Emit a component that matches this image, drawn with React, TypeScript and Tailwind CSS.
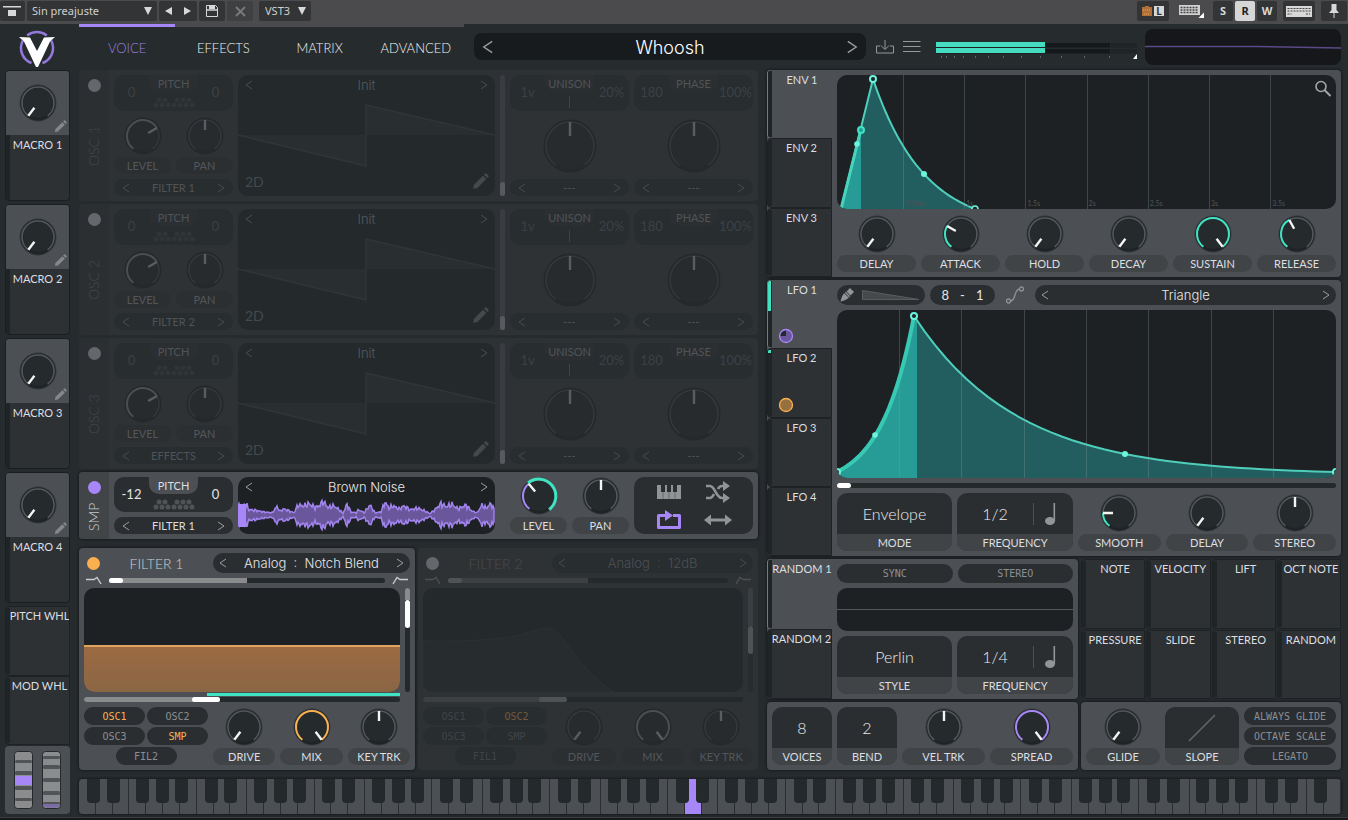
import type { ReactNode } from "react";
import clsx from "clsx";

const TEAL = "#3fe3c2";
const PURPLE = "#a787f7";
const ORANGE = "#fbb04f";

type Point = [number, number];

// samples an exponential segment between two points, k bends the curve
function curve([x0, y0]: Point, [x1, y1]: Point, k: number): string {
    const steps = 40;
    let d = "";
    for (let i = 0; i <= steps; i++) {
        const u = i / steps;
        const v = (1 - Math.exp(-k * u)) / (1 - Math.exp(-k));
        d += ` L${(x0 + (x1 - x0) * u).toFixed(2)} ${(y0 + (y1 - y0) * v).toFixed(2)}`;
    }
    return d;
}

function polar(c: number, r: number, deg: number): string {
    const a = ((deg - 90) * Math.PI) / 180;
    return `${(c + r * Math.cos(a)).toFixed(2)} ${(c + r * Math.sin(a)).toFixed(2)}`;
}

function arc(c: number, r: number, from: number, to: number): string {
    const large = to - from > 180 ? 1 : 0;
    return `M${polar(c, r, from)} A${r} ${r} 0 ${large} 1 ${polar(c, r, to)}`;
}

type DialProps = {
    value: number;
    color?: string;
    modColor?: string;
    big?: boolean;
};

function Dial({ value, color, modColor, big }: DialProps) {
    const size = big ? 56 : 40;
    const c = size / 2;
    const r = big ? 24 : 16;
    const angle = -143 + 286 * value;
    return (
        <svg
            width={size}
            height={size}
            viewBox={`0 0 ${size} ${size}`}
            className="shrink-0"
            aria-hidden="true">
            <circle cx={c} cy={c} r={r + 2.5} className="fill-[#1b1f22]/50 group-data-off:fill-[#25292c]" />
            <circle cx={c} cy={c} r={r + 1.5} className="fill-[#1f2427] group-data-off:fill-[#25292c]" />
            <circle cx={c} cy={c} r={r - 1} className="fill-[#252a2d] group-data-off:fill-[#272b2e]" />
            <path
                d={arc(c, r, -143, 143)}
                fill="none"
                strokeWidth="1.6"
                className={big ? "stroke-[#34383b]" : "stroke-[#54585b] group-data-off:stroke-[#34383b]"}
            />
            {value > 0 && value !== 0.5 && (
                <path
                    d={arc(c, r, -143, angle)}
                    fill="none"
                    stroke={color}
                    strokeWidth="2"
                    className="group-data-off:stroke-[#4a4e51]"
                />
            )}
            {modColor && (
                <path d={arc(c, r + 1, angle, 143)} fill="none" stroke={modColor} strokeWidth="3" />
            )}
            <path
                d={`M${polar(c, big ? 10 : 6, angle)} L${polar(c, r, angle)}`}
                strokeWidth="2.4"
                className="stroke-[#f4f4f4] group-data-off:stroke-[#595d60]"
            />
        </svg>
    );
}

function Knob({ label, ...dial }: DialProps & { label: string }) {
    return (
        <label className="flex min-w-0 flex-1 flex-col items-center justify-end gap-px">
            <Dial {...dial} />
            <input
                type="range"
                min={0}
                max={1}
                step={0.01}
                defaultValue={dial.value}
                className="sr-only"
            />
            <span className="flex h-[17px] w-full items-center justify-center rounded-full bg-[#414447] pt-0.5 text-[11px] whitespace-nowrap text-[#dcdee0] group-data-off:bg-[#2b2f32] group-data-off:text-[#53575a]">
                {label}
            </span>
        </label>
    );
}

function BigKnob({ name }: { name: string }) {
    return (
        <label className="flex h-[58px] items-end justify-center">
            <Dial value={0.5} big />
            <input type="range" aria-label={name} defaultValue={50} className="sr-only" />
        </label>
    );
}

function Chevron({ right, big }: { right?: boolean; big?: boolean }) {
    return (
        <svg
            width={big ? 12 : 8}
            height={big ? 14 : 10}
            viewBox="0 0 8 10"
            fill="none"
            stroke="currentColor"
            strokeWidth="1"
            aria-hidden="true">
            <path d={right ? "M1 1l6 4-6 4" : "M7 1L1 5l6 4"} />
        </svg>
    );
}

type SelectorProps = {
    name: string;
    children: ReactNode;
    className?: string;
    big?: boolean;
};

function Selector({ name, children, className, big }: SelectorProps) {
    return (
        <div className={clsx("flex items-center justify-between", className)}>
            <button
                aria-label={`Previous ${name}`}
                className="text-[#9b9ea0] group-data-off:text-[#484c4f]">
                <Chevron big={big} />
            </button>
            <span className="pt-0.5 whitespace-pre">{children}</span>
            <button aria-label={`Next ${name}`} className="text-[#9b9ea0] group-data-off:text-[#484c4f]">
                <Chevron right big={big} />
            </button>
        </div>
    );
}

const pill =
    "h-[17px] rounded-full bg-[#2a2e31] px-2 text-[11px] text-[#dcdee0] group-data-off:bg-[#282d30] group-data-off:text-[#505457]";

function PowerButton({ name, color }: { name: string; color?: string }) {
    return (
        <button
            aria-label={name}
            className="size-[13px] rounded-full bg-[#64676c]"
            style={{ backgroundColor: color }}
        />
    );
}

function KeyDots() {
    const dots: Point[] = [];
    for (let i = 0; i < 7; i++) dots.push([3 + i * 6, 9]);
    for (const i of [0, 1, 3, 4, 5]) dots.push([6 + i * 6, 4]);
    return (
        <svg width="42" height="13" viewBox="0 0 42 13" aria-hidden="true">
            {dots.map(([x, y]) => (
                <circle key={`${x}-${y}`} cx={x} cy={y} r="2.5" className="fill-[#505356] group-data-off:fill-[#313538]" />
            ))}
        </svg>
    );
}

type ValueBoxProps = {
    title: string;
    left: string;
    right: string;
    children?: ReactNode;
    className?: string;
};

// two values with a title notch cut out of the top edge
function ValueBox({ title, left, right, children, className }: ValueBoxProps) {
    return (
        <div
            className={clsx(
                "grid grid-cols-[35px_1fr_35px] items-center rounded-[10px] bg-[#2a2e31] group-data-off:bg-[#282d30]",
                className,
            )}>
            <span className="text-center text-[13px] text-[#e6e6e6] group-data-off:text-[#3d4144]">{left}</span>
            <div className="flex h-full flex-col items-center gap-1">
                <span className="flex h-[17px] w-full items-center justify-center rounded-b-[10px] bg-[#4c4f53] pt-0.5 text-[11px] text-[#dcdee0] group-data-off:bg-[#2b2f32] group-data-off:text-[#505457]">
                    {title}
                </span>
                {children}
            </div>
            <span className="text-center text-[13px] text-[#e6e6e6] group-data-off:text-[#3d4144]">{right}</span>
        </div>
    );
}

function Pencil({ size }: { size: number }) {
    return (
        <svg width={size} height={size} viewBox="0 0 14 14" fill="currentColor" aria-hidden="true">
            <path d="M1 13l.5-3.2L9 2.3 11.7 5 4.2 12.5zM9.8 1.5l1-1a.8.8 0 0 1 1.1 0l1.600 1.600a.8.8 0 0 1 0 1.100l-1 1z" />
        </svg>
    );
}

function SideStrip({ name, color }: { name: string; color?: string }) {
    return (
        <div className="flex w-[30px] shrink-0 flex-col items-center rounded-l bg-[#424548] pt-[9px] group-data-off:bg-[#2b2f32]">
            <PowerButton name={name} color={color} />
            <span className="flex flex-1 rotate-180 items-center justify-center text-[14px] leading-[14px] font-light text-[#c4c6c8] [writing-mode:vertical-rl] group-data-off:text-[#44484b]">
                {name}
            </span>
        </div>
    );
}

function Oscillator({ name, output }: { name: string; output: string }) {
    return (
        <section data-off="" className="group flex rounded bg-[#2e3235]">
            <SideStrip name={name} />
            <div className="flex min-w-0 flex-1 gap-[5px] p-[5px]">
                <div className="flex w-[119px] shrink-0 flex-col gap-[5px]">
                    <ValueBox title="PITCH" left="0" right="0" className="h-9">
                        <KeyDots />
                    </ValueBox>
                    <div className="flex gap-[5px]">
                        <Knob label="LEVEL" value={0.71} />
                        <Knob label="PAN" value={0.5} />
                    </div>
                    <Selector name="output" className={pill}>
                        {output}
                    </Selector>
                </div>
                <div className="relative min-w-0 flex-1 overflow-hidden rounded-[10px] bg-[#24292c]">
                    <svg
                        viewBox="0 0 257 121"
                        preserveAspectRatio="none"
                        className="absolute inset-0 size-full"
                        aria-hidden="true">
                        <path
                            d="M0 60L128 91V30L257 60"
                            fill="#292e31"
                            stroke="#303538"
                            strokeWidth="1.500"
                        />
                    </svg>
                    <Selector name="wavetable" className="relative h-5 px-[7px] font-[Inter] text-[13px] font-light text-[#55595c]">
                        Init
                    </Selector>
                    <span className="absolute bottom-1 left-[7px] text-[14px] text-[#45494c]">2D</span>
                    <button aria-label="Edit wavetable" className="absolute right-1.5 bottom-1.5 text-[#45494c]">
                        <Pencil size={17} />
                    </button>
                </div>
                <div className="flex w-[5px] shrink-0 items-end rounded-sm bg-[#393c40]">
                    <div className="h-3.5 w-full rounded-sm bg-[#575a5e]" />
                </div>
                <div className="flex w-[119px] shrink-0 flex-col gap-[5px]">
                    <ValueBox title="UNISON" left="1v" right="20%" className="h-9">
                        <span className="h-3 w-px bg-[#3f4346]" />
                    </ValueBox>
                    <BigKnob name="Unison detune" />
                    <Selector name="unison warp" className={pill}>
                        ---
                    </Selector>
                </div>
                <div className="flex w-[119px] shrink-0 flex-col gap-[5px]">
                    <ValueBox title="PHASE" left="180" right="100%" className="h-9" />
                    <BigKnob name="Phase" />
                    <Selector name="phase warp" className={pill}>
                        ---
                    </Selector>
                </div>
            </div>
        </section>
    );
}

// peak heights of the noise sample: [x, height]
const peaks: Point[] = [
    [0, 12], [9, 12], [11, 7], [18, 6], [26, 4], [34, 3], [39, 11], [42, 5], [46, 8], [52, 5],
    [56, 3], [60, 13], [66, 12], [71, 15], [77, 10], [81, 12], [85, 18], [90, 10], [96, 12], [102, 6],
    [105, 2], [109, 14], [113, 4], [118, 3], [121, 7], [126, 3], [132, 13], [137, 3], [143, 4], [147, 17],
    [151, 9], [155, 12], [161, 8], [166, 12], [172, 7], [180, 9], [187, 5], [192, 2], [196, 6], [203, 15],
    [208, 11], [214, 14], [220, 8], [228, 13], [234, 5], [239, 3], [244, 13], [248, 9], [253, 15], [257, 5],
];

function NoiseWave() {
    const top: string[] = [];
    const bottom: string[] = [];
    for (let x = 0; x <= 256; x += 1) {
        const i = Math.min(
            peaks.length - 2,
            peaks.findIndex((p, n) => n + 1 < peaks.length && x <= peaks[n + 1][0]),
        );
        const [x0, h0] = peaks[i];
        const [x1, h1] = peaks[i + 1];
        const h = h0 + ((h1 - h0) * (x - x0)) / (x1 - x0);
        const jitter = 0.75 + 0.25 * Math.sin(x * 1.9) * Math.cos(x * 0.37);
        top.push(`${x} ${(19 - h * jitter).toFixed(1)}`);
        bottom.unshift(`${x} ${(19 + h * jitter).toFixed(1)}`);
    }
    return (
        <svg
            viewBox="0 0 257 38"
            preserveAspectRatio="none"
            className="absolute inset-x-0 bottom-0 h-[38px] w-full"
            aria-hidden="true">
            <path
                d={`M${top.join(" L")} L${bottom.join(" L")}Z`}
                fill="#69569b"
                stroke="#a284ee"
                strokeWidth="1.500"
            />
            <rect x="0" y="8" width="8" height="23" fill={PURPLE} />
        </svg>
    );
}

function Sampler() {
    return (
        <section className="flex rounded bg-[#4c4f53] shadow-[0_0_2px_1px_#1a1d20]">
            <SideStrip name="SMP" color={PURPLE} />
            <div className="flex h-[67px] min-w-0 flex-1 gap-[5px] p-[5px]">
                <div className="flex w-[119px] shrink-0 flex-col gap-[5px]">
                    <ValueBox title="PITCH" left="-12" right="0" className="h-[35px]">
                        <KeyDots />
                    </ValueBox>
                    <Selector name="output" className={pill}>
                        FILTER 1
                    </Selector>
                </div>
                <div className="relative min-w-0 flex-1 overflow-hidden rounded-[10px] bg-[#1d2124]">
                    <NoiseWave />
                    <Selector name="sample" className="relative h-5 px-[7px] font-[Inter] text-[13px] font-light text-[#e8e8e8]">
                        Brown Noise
                    </Selector>
                </div>
                <div className="ml-2.5 flex w-[119px] shrink-0 gap-[5px]">
                    <Knob label="LEVEL" value={0.36} color={PURPLE} modColor={TEAL} />
                    <Knob label="PAN" value={0.5} />
                </div>
                <div className="grid w-[119px] shrink-0 grid-cols-2 place-items-center rounded-[10px] bg-[#2a2e31] px-2.5 text-[#919395]">
                    <button aria-label="Keytrack">
                        <svg width="26" height="16" viewBox="0 0 26 16" fill="currentColor">
                            <path d="M1 1h4v7h4V1h2v7h4V1h2v7h4V1h4v14H1z" />
                            <path d="M7 8v7M13 8v7M19 8v7" stroke="#6b6e70" strokeWidth="1" />
                        </svg>
                    </button>
                    <button aria-label="Random phase">
                        <svg width="26" height="22" viewBox="0 0 26 22" fill="none" stroke="currentColor" strokeWidth="2.6">
                            <path d="M1 5h4c5 0 6 12 12 12h3M1 17h4c2 0 3-2 4-4M13 8c1-2 2-3 4-3h3" />
                            <path d="M18 0l7 5-7 5zM18 12l7 5-7 5z" fill="currentColor" stroke="none" />
                        </svg>
                    </button>
                    <button aria-label="Loop" className="text-[#a787f7]">
                        <svg width="26" height="20" viewBox="0 0 26 20" fill="none" stroke="currentColor" strokeWidth="3">
                            <path d="M9 5.500H2.500v12h21v-12H17" strokeLinejoin="round" />
                            <path d="M9 0l8 5.500-8 5.500z" fill="currentColor" stroke="none" />
                        </svg>
                    </button>
                    <button aria-label="Bounce">
                        <svg width="28" height="12" viewBox="0 0 28 12" fill="currentColor">
                            <path d="M0 6l7-5.500v4h14v-4L28 6l-7 5.500v-4H7v4z" />
                        </svg>
                    </button>
                </div>
            </div>
        </section>
    );
}

function SlopeIcon({ flip }: { flip?: boolean }) {
    return (
        <svg
            width="16"
            height="9"
            viewBox="0 0 16 9"
            fill="none"
            strokeWidth="1.4"
            className="shrink-0 stroke-[#c9cbcc] group-data-off:stroke-[#4c5053]"
            aria-hidden="true">
            <path d={flip ? "M1 8l4-6.500 3 2h8" : "M0 3.500h8l3-2 4 6.500"} />
        </svg>
    );
}

type FilterProps = {
    name: string;
    model: string;
    sources: string[];
    active: string[];
    off?: boolean;
    className: string;
    children: ReactNode;
};

function Filter({ name, model, sources, active, off, className, children }: FilterProps) {
    return (
        <section
            data-off={off ? "" : undefined}
            className={clsx(
                "group flex min-w-0 flex-col gap-[5px] rounded p-[5px]",
                off ? "bg-[#2e3235]" : "bg-[#4c4f53] shadow-[0_0_2px_1px_#1a1d20]",
                className,
            )}>
            <div className="flex h-5 items-center">
                <div className="flex w-[129px] shrink-0 items-center pl-[3px]">
                    <PowerButton name={name} color={off ? undefined : ORANGE} />
                    <h2 className="flex-1 text-center text-[14px] font-light text-[#cdcfd1] group-data-off:text-[#484c4f]">
                        {name}
                    </h2>
                </div>
                <Selector
                    name="filter model"
                    className="h-5 flex-1 rounded-full bg-[#2a2e31] px-1.5 font-[Inter] text-[13px] font-light text-[#e8e8e8] group-data-off:bg-[#282d30] group-data-off:text-[#4c5053]">
                    {model}
                </Selector>
            </div>
            <div className="flex h-[5px] items-center gap-[7px] px-0.5">
                <SlopeIcon />
                <div className="flex h-full flex-1 rounded-sm bg-[#24292c]">
                    <div className="h-full w-1/2 rounded-l-sm bg-[#898b8d] group-data-off:bg-[#3d4043]">
                        <div className="h-full w-3.5 rounded-sm bg-white group-data-off:bg-[#505356]" />
                    </div>
                </div>
                <SlopeIcon flip />
            </div>
            <div className="flex h-[104px] gap-[5px]">
                <div className="min-w-0 flex-1 overflow-hidden rounded-[10px] bg-[#1d2124] group-data-off:bg-[#24292c]">
                    {children}
                </div>
                <div
                    className={clsx(
                        "flex w-[5px] flex-col rounded-sm",
                        off ? "bg-linear-to-b from-[#3a3d41] from-37% to-[#272c2f] to-37% pt-[38px]" : "bg-[#24292c]",
                    )}>
                    {!off && <div className="h-3 rounded-t-sm bg-[#898b8d]" />}
                    <div className="h-7 rounded-sm bg-white group-data-off:bg-[#505356]" />
                </div>
            </div>
            <div className="relative mr-2.5 flex h-[5px] rounded-sm bg-[#24292c]">
                <div className="flex h-full w-[43%] justify-end rounded-sm bg-[#898b8d] group-data-off:w-[45%] group-data-off:bg-[#3d4043]">
                    <div className="h-full w-7 rounded-sm bg-white group-data-off:bg-[#505356]" />
                </div>
                {!off && <div className="absolute -top-1 right-0 h-[3px] w-[61%] bg-[#3fe3c2]" />}
            </div>
            <div className="flex gap-[5px]">
                <div className="flex w-[124px] shrink-0 flex-wrap justify-center gap-0.5">
                    {sources.map((source) => (
                        <button
                            key={source}
                            className={clsx(
                                "h-[18px] w-[61px] rounded-full bg-[#2a2e31] font-['DejaVu_Sans_Mono'] text-[10px] group-data-off:bg-[#282d30]",
                                active.includes(source)
                                    ? "text-[#fbb04f] group-data-off:text-[#75593a]"
                                    : "text-[#8c8f91] group-data-off:text-[#404447]",
                            )}>
                            {source}
                        </button>
                    ))}
                </div>
                <Knob label="DRIVE" value={0} />
                <Knob label="MIX" value={1} color={ORANGE} />
                <Knob label="KEY TRK" value={0.5} />
            </div>
        </section>
    );
}

type ModTabProps = {
    label: string;
    active?: boolean;
    children?: ReactNode;
    meter?: string;
};

function ModTab({ label, active, children, meter }: ModTabProps) {
    return (
        <button
            className={clsx(
                "relative flex min-h-0 flex-1 items-start justify-center overflow-hidden rounded-l-sm pl-1 text-[11px] leading-[14px] whitespace-nowrap text-[#dcdee0]",
                active
                    ? "border-l border-[#797c7f] bg-[#4c4f53] pt-[3px]"
                    : "border border-[#1e2225] bg-[#2d3134] pt-0.5",
            )}>
            <span className="absolute inset-y-px left-0 w-1 bg-[#1f2427]">
                {meter && <span className="block w-[3px] bg-[#3fe3c2]" style={{ height: meter }} />}
            </span>
            {label}
            {children}
        </button>
    );
}

function ModDot({ color, fill, slice }: { color: string; fill: string; slice?: boolean }) {
    return (
        <svg width="16" height="16" viewBox="0 0 16 16" className="absolute bottom-1 left-2.5" aria-hidden="true">
            <circle cx="8" cy="8" r="6.500" fill={fill} stroke={color} strokeWidth="1.300" />
            {slice && <path d="M8 8V2.500A5.500 5.500 0 0 0 2.500 8z" fill="#24292c" />}
        </svg>
    );
}

function Macro({ label }: { label: string }) {
    return (
        <div className="overflow-hidden rounded border border-[#1a1e21] bg-[#2d3134]">
            <label className="relative flex h-16 items-center justify-center bg-[#4c4f53]">
                <Dial value={0} />
                <input type="range" aria-label={label} defaultValue={0} className="sr-only" />
                <span className="absolute right-0.5 bottom-0.5 text-[#85888b]">
                    <Pencil size={13} />
                </span>
            </label>
            <div className="h-[65px] border-l-4 border-[#1f2427] pt-[3px] pr-1 text-center text-[11px] leading-[14px] text-[#dcdee0]">
                {label}
            </div>
        </div>
    );
}

function LabelBox({ label, children, className }: { label: string; children: ReactNode; className?: string }) {
    return (
        <div className={clsx("flex h-[58px] flex-col overflow-hidden rounded-[10px] bg-[#2a2e31]", className)}>
            <button className="flex flex-1 items-center justify-center text-[16px] font-light text-[#ececec]">
                {children}
            </button>
            <span className="flex h-[17px] items-center justify-center bg-[#414447] pt-0.5 text-[11px] text-[#dcdee0]">
                {label}
            </span>
        </div>
    );
}

function Frequency({ value }: { value: string }) {
    return (
        <LabelBox label="FREQUENCY" className="flex-1">
            <span className="w-[76px] text-center">{value}</span>
            <svg width="40" height="24" viewBox="0 0 40 24" aria-hidden="true">
                <path d="M.5 1v22" stroke="#4c4f53" />
                <ellipse cx="17" cy="19" rx="5" ry="4" fill="#929597" />
                <path d="M21.300 1v18" stroke="#929597" strokeWidth="1.600" />
            </svg>
        </LabelBox>
    );
}

function Graph({ height, lines, children }: { height: number; lines: number[]; children: ReactNode }) {
    return (
        <svg
            viewBox={`0 0 499 ${height}`}
            preserveAspectRatio="none"
            className="absolute inset-0 size-full"
            aria-hidden="true">
            {children}
            {lines.map((x) => (
                <path key={x} d={`M${x + 0.5} 0V${height}`} stroke="#8a9a9c" strokeOpacity=".3" />
            ))}
        </svg>
    );
}

const panel = "flex rounded bg-[#4c4f53] shadow-[0_0_2px_1px_#1a1d20]";
const tabColumn = "flex w-[65px] shrink-0 flex-col rounded-l";
const times = ["500ms", "1s", "1.5s", "2s", "2.5s", "3s", "3.5s"];

function Envelope() {
    const decay = curve([36, 4], [138, 134], 2);
    return (
        <section className={panel}>
            <div className={tabColumn}>
                <ModTab label="ENV 1" active />
                <ModTab label="ENV 2" />
                <ModTab label="ENV 3" />
            </div>
            <div className="flex min-w-0 flex-1 flex-col gap-[5px] p-[5px]">
                <div className="relative h-[134px] overflow-hidden rounded-[10px] bg-[#1d2124]">
                    <Graph height={134} lines={times.map((_, i) => 66 + Math.round(i * 61.2))}>
                        <path d={`M4 134 L36 4${decay}Z`} fill="#225d5f" />
                        <path d="M4 134L24 54V134z" fill="#279b95" />
                        <path d="M4 134L24 54" stroke={TEAL} strokeWidth="3" />
                        <path d={`M4 134 L36 4${decay}`} fill="none" stroke="#4fcfbb" strokeWidth="2" />
                        <circle cx="36" cy="4" r="3" fill="#1d2124" stroke="#6bf5dc" strokeWidth="2" />
                        <circle cx="24" cy="55" r="3" fill="#279b95" stroke={TEAL} strokeWidth="2" />
                        <circle cx="20" cy="69" r="2.800" fill="#6bf5dc" />
                        <circle cx="87" cy="99" r="3" fill="#6bf5dc" />
                        <circle cx="138" cy="134" r="3" fill="#1d2124" stroke="#6bf5dc" strokeWidth="1.600" />
                    </Graph>
                    {times.map((time, i) => (
                        <span
                            key={time}
                            className="absolute bottom-0.5 text-[7px] leading-2 text-[#4f5456]"
                            style={{ left: `${((68 + i * 61.2) / 499) * 100}%` }}>
                            {time}
                        </span>
                    ))}
                    <button aria-label="Zoom" className="absolute top-[5px] right-1 text-[#a3a5a7]">
                        <svg width="18" height="18" viewBox="0 0 18 18" fill="none" stroke="currentColor">
                            <circle cx="7" cy="6.500" r="5" strokeWidth="1.600" />
                            <path d="M10.500 10l6 6" strokeWidth="2" />
                        </svg>
                    </button>
                </div>
                <div className="flex gap-[5px]">
                    <Knob label="DELAY" value={0} />
                    <Knob label="ATTACK" value={0.29} color={TEAL} />
                    <Knob label="HOLD" value={0} />
                    <Knob label="DECAY" value={0} />
                    <Knob label="SUSTAIN" value={1} color={TEAL} />
                    <Knob label="RELEASE" value={0.4} color={TEAL} />
                </div>
            </div>
        </section>
    );
}

function Lfo() {
    const rise = curve([0, 162], [77, 6], -2.34);
    const fall = curve([77, 6], [499, 162], 4.07);
    return (
        <section className={panel}>
            <div className={tabColumn}>
                <ModTab label="LFO 1" active meter="30px">
                    <ModDot color={PURPLE} fill="#6b579f" slice />
                </ModTab>
                <ModTab label="LFO 2" meter="3px">
                    <ModDot color={ORANGE} fill="#96703f" />
                </ModTab>
                <ModTab label="LFO 3" />
                <ModTab label="LFO 4" />
            </div>
            <div className="flex min-w-0 flex-1 flex-col gap-[5px] p-[5px]">
                <div className="flex h-5 items-center">
                    <button
                        aria-label="Paint pattern"
                        className="mr-[5px] flex h-5 w-[88px] items-center gap-2 rounded-[10px] bg-[#2a2e31] px-[3px]">
                        <svg width="14" height="14" viewBox="0 0 14 14" fill="#929597">
                            <path d="M10 0l4 4-3.500 3.500-4-4zM5.800 3.800l4.400 4.400-1 1-4.400-4.400zM4.200 5.200l4.600 4.600c-1.500 1.500-4 2.700-8.300 3.700 1-4.300 2.200-6.800 3.700-8.300z" />
                        </svg>
                        <svg width="58" height="10" viewBox="0 0 58 10">
                            <path d="M.5.500V9.500H57z" fill="#46494c" stroke="#5a5d60" />
                        </svg>
                    </button>
                    <div className="flex h-5 w-[65px] items-center justify-around rounded-full bg-[#2a2e31] px-1.5 pt-0.5 text-[13px] text-[#e8e8e8]">
                        <span>8</span>
                        <span>-</span>
                        <span>1</span>
                    </div>
                    <button aria-label="Smooth curve" className="flex w-10 justify-center">
                        <svg width="18" height="18" viewBox="0 0 18 18" fill="none" stroke="#909395" strokeWidth="1.300">
                            <circle cx="2.500" cy="15" r="2" />
                            <circle cx="15.500" cy="3" r="2" />
                            <path d="M4.500 15c6-.5 3-11.500 9-12" />
                        </svg>
                    </button>
                    <Selector
                        name="shape"
                        className="h-5 flex-1 rounded-full bg-[#2a2e31] px-1.5 font-[Inter] text-[13px] font-light text-[#e8e8e8]">
                        Triangle
                    </Selector>
                </div>
                <div className="relative h-[168px] overflow-hidden rounded-[10px] bg-[#1d2124]">
                    <Graph height={168} lines={[62, 124, 187, 249, 311, 374, 436]}>
                        <path d={`M0 168${rise}${fall} V168Z`} fill="#225d5f" />
                        <path d={`M0 168${rise} L80 12V168Z`} fill="#279b95" />
                        <path d={`M0 162${rise}`} fill="none" stroke="#37c9b3" strokeWidth="4" strokeLinejoin="round" />
                        <path d={`M77 6${fall}`} fill="none" stroke="#4fcfbb" strokeWidth="2" />
                        <circle cx="77" cy="6" r="3" fill="#1d2124" stroke="#6bf5dc" strokeWidth="2" />
                        <circle cx="38" cy="125" r="2.800" fill="#6bf5dc" />
                        <circle cx="288" cy="144" r="3" fill="#6bf5dc" />
                        <circle cx="0" cy="162" r="3" fill="#1d2124" stroke="#6bf5dc" strokeWidth="2" />
                        <circle cx="499" cy="162" r="3" fill="#1d2124" stroke="#6bf5dc" strokeWidth="2" />
                    </Graph>
                </div>
                <div className="h-[5px] rounded-sm bg-[#24292c]">
                    <div className="h-full w-3.5 rounded-sm bg-white" />
                </div>
                <div className="flex gap-[5px]">
                    <LabelBox label="MODE" className="w-[115px] shrink-0">
                        Envelope
                    </LabelBox>
                    <div className="flex w-[116px] shrink-0">
                        <Frequency value="1/2" />
                    </div>
                    <Knob label="SMOOTH" value={0.185} color={TEAL} />
                    <Knob label="DELAY" value={0} />
                    <Knob label="STEREO" value={0.5} />
                </div>
            </div>
        </section>
    );
}

function Random() {
    return (
        <section className={clsx(panel, "w-[311px] shrink-0")}>
            <div className={tabColumn}>
                <ModTab label="RANDOM 1" active />
                <ModTab label="RANDOM 2" />
            </div>
            <div className="flex min-w-0 flex-1 flex-col gap-[5px] p-[5px]">
                <div className="flex gap-[5px]">
                    {["SYNC", "STEREO"].map((option) => (
                        <button
                            key={option}
                            className="h-[19px] flex-1 rounded-full bg-[#2a2e31] font-['DejaVu_Sans_Mono'] text-[10px] text-[#8c8f91]">
                            {option}
                        </button>
                    ))}
                </div>
                <div className="flex h-[43px] items-center rounded-[10px] bg-[#1d2124]">
                    <div className="h-px w-full bg-[#56595c]" />
                </div>
                <div className="flex gap-[5px]">
                    <LabelBox label="STYLE" className="w-[115px] shrink-0">
                        Perlin
                    </LabelBox>
                    <Frequency value="1/4" />
                </div>
            </div>
        </section>
    );
}

const sources = ["NOTE", "VELOCITY", "LIFT", "OCT NOTE", "PRESSURE", "SLIDE", "STEREO", "RANDOM"];

function VoiceSettings() {
    return (
        <div className="flex gap-[3px]">
            <section className={clsx(panel, "w-[311px] shrink-0 gap-[5px] p-[5px]")}>
                <LabelBox label="VOICES" className="w-[60px] shrink-0">
                    8
                </LabelBox>
                <LabelBox label="BEND" className="w-[60px] shrink-0">
                    2
                </LabelBox>
                <Knob label="VEL TRK" value={0.5} />
                <Knob label="SPREAD" value={1} color={PURPLE} />
            </section>
            <section className={clsx(panel, "min-w-0 flex-1 gap-[5px] p-[5px]")}>
                <Knob label="GLIDE" value={0} />
                <LabelBox label="SLOPE" className="flex-1">
                    <svg width="28" height="28" viewBox="0 0 28 28" aria-hidden="true">
                        <path d="M1 27L27 1" stroke="#65686b" strokeWidth="1.500" />
                    </svg>
                </LabelBox>
                <div className="flex w-[92px] shrink-0 flex-col gap-0.5">
                    {["ALWAYS GLIDE", "OCTAVE SCALE", "LEGATO"].map((option) => (
                        <button
                            key={option}
                            className="h-[18px] rounded-full bg-[#2a2e31] font-['DejaVu_Sans_Mono'] text-[10px] whitespace-nowrap text-[#8c8f91]">
                            {option}
                        </button>
                    ))}
                </div>
            </section>
        </div>
    );
}

// offset of the black key from the right edge of its white key, by note C..B
const blackOffsets: (string | null)[] = [
    "-right-[5px]",
    "-right-2",
    null,
    "-right-1",
    "-right-[7px]",
    "-right-[9px]",
    null,
];

function Keyboard() {
    return (
        <div className="flex h-[35px] overflow-hidden rounded shadow-[0_0_2px_1px_#1a1d20]">
            {Array.from({ length: 75 }, (_, i) => {
                const offset = blackOffsets[i % 7];
                return (
                    <div
                        key={i}
                        className={clsx(
                            "relative flex-1 border-r border-[#2a2e31]",
                            i === 36 ? "bg-[#a787f7]" : "bg-[#4c4f53]",
                        )}>
                        {offset && i < 74 && (
                            <div className={clsx("absolute top-0 z-10 h-6 w-[13px] rounded-b bg-[#24292c]", offset)} />
                        )}
                    </div>
                );
            })}
        </div>
    );
}

function Wheel({ spring }: { spring?: boolean }) {
    const ridges = spring ? [9, 20, 35, 47] : [5, 14, 27, 40, 51];
    return (
        <svg width="19" height="58" viewBox="0 0 19 58" aria-hidden="true">
            <rect x=".5" y=".5" width="18" height="57" rx="3" fill="#8a8c8e" stroke="#26292c" />
            {ridges.map((y) => (
                <rect key={y} x="1" y={y} width="17" height={y < 10 || y > 45 ? 3 : 4} rx="1.500" fill="#515457" />
            ))}
            {spring ? (
                <rect x="1" y="25" width="17" height="9" fill={PURPLE} />
            ) : (
                <path d="M1 53h17v2.500q-8.500 2.500-17 0z" fill="#7d6ba8" />
            )}
        </svg>
    );
}

const hostButton = "flex h-5 items-center justify-center rounded-xs bg-[#333435] text-[#d8d8d8]";

function HostBar() {
    return (
        <header className="flex h-6 items-start bg-[#4b4b4d] pt-px font-['Noto_Sans'] text-[11px] text-[#cfd0d1]">
            <button aria-label="Menu" className={clsx(hostButton, "w-[25px]")}>
                <svg width="19" height="12" viewBox="0 0 19 12" fill="currentColor">
                    <path d="M0 1h18v1.500H0zM5 5h8v6H5z" />
                </svg>
            </button>
            <div className="relative ml-0.5">
                <select aria-label="Preset" className="block h-5 w-[130px] appearance-none rounded-xs bg-[#333435] pl-[5px]">
                    <option>Sin preajuste</option>
                </select>
                <Caret className="absolute top-1.5 right-[5px]" />
            </div>
            <div className={clsx(hostButton, "ml-0.5 w-[38px] gap-3")}>
                <button aria-label="Previous preset">
                    <svg width="7" height="8" viewBox="0 0 7 8" fill="currentColor">
                        <path d="M7 0v8L0 4z" />
                    </svg>
                </button>
                <button aria-label="Next preset">
                    <svg width="7" height="8" viewBox="0 0 7 8" fill="currentColor">
                        <path d="M0 0v8l7-4z" />
                    </svg>
                </button>
            </div>
            <button aria-label="Save preset" className={clsx(hostButton, "ml-0.5 w-[26px]")}>
                <svg width="12" height="12" viewBox="0 0 12 12" fill="none" stroke="currentColor">
                    <path d="M.5.500h9l2 2v9H.5z" />
                    <path d="M1 5h10" strokeWidth="1.500" />
                    <path d="M3 1h6v3H3z" fill="currentColor" stroke="none" />
                </svg>
            </button>
            <button aria-label="Delete preset" className="ml-0.5 flex h-5 w-[26px] items-center justify-center rounded-xs bg-[#3f4041]">
                <svg width="11" height="11" viewBox="0 0 11 11" stroke="#77797a" strokeWidth="2">
                    <path d="M1 1l9 9M10 1l-9 9" />
                </svg>
            </button>
            <div className="relative ml-1.5">
                <select aria-label="Plugin format" className="block h-5 w-[52px] appearance-none rounded-xs bg-[#333435] pl-1.5">
                    <option>VST3</option>
                </select>
                <Caret className="absolute top-1.5 right-[5px]" />
            </div>
            <div className="ml-auto flex">
                <button aria-label="Latency" className={clsx(hostButton, "w-8 gap-0.5")}>
                    <svg width="10" height="10" viewBox="0 0 10 10">
                        <path d="M3 0h4v1h3v9H0V1h3z" fill="#b0703a" />
                        <path d="M1 4h8M2 8h6" stroke="#f0a050" strokeDasharray="1 1" />
                    </svg>
                    <span className="flex h-2.5 w-2.5 items-center justify-center bg-[#d8d8d8] text-[10px] leading-none font-bold text-[#333435]">
                        L
                    </span>
                </button>
                <button aria-label="Grid" className="ml-1.5 flex h-5 w-[31px] items-center justify-center text-[#d0d0d0]">
                    <svg width="26" height="14" viewBox="0 0 26 14" fill="currentColor">
                        <path d="M1 1h21v10H1z" />
                        <path d="M2.500 3.500h18M2.500 6h18M2.500 8.500h18" stroke="#444" strokeWidth="1.500" strokeDasharray="2 1" />
                        <path d="M26 8.500V14h-5.500z" fill="#fff" />
                    </svg>
                </button>
                <button className={clsx(hostButton, "ml-[7px] w-5 font-bold")}>S</button>
                <button className="ml-0.5 h-5 w-5 rounded-xs bg-[#d6d6d7] font-bold text-[#222]">R</button>
                <button className={clsx(hostButton, "ml-0.5 w-5 font-bold")}>W</button>
                <button aria-label="Keyboard" className={clsx(hostButton, "ml-1.5 w-8")}>
                    <svg width="26" height="11" viewBox="0 0 26 11" fill="currentColor">
                        <path d="M0 0h26v11H0z" />
                        <path d="M1.500 2.500h23M1.500 5h23M1.500 8h4M20 8h4" stroke="#444" strokeWidth="1.200" strokeDasharray="2 1" />
                    </svg>
                </button>
                <button aria-label="Pin" className={clsx(hostButton, "mr-px ml-1.5 w-[26px]")}>
                    <svg width="10" height="14" viewBox="0 0 10 14" fill="currentColor">
                        <path d="M2.500 0h5v6L10 9H0l2.500-3zM4.500 9h1v5h-1z" />
                    </svg>
                </button>
            </div>
        </header>
    );
}

function Caret({ className }: { className: string }) {
    return (
        <svg width="8" height="8" viewBox="0 0 8 8" className={clsx("pointer-events-none", className)} aria-hidden="true">
            <path d="M0 0h8L4 8z" fill="#d8d8d8" />
        </svg>
    );
}

function Logo() {
    return (
        <svg width="38" height="38" viewBox="0 0 38 38" aria-hidden="true">
            <path
                d={`${arc(19, 16, -38, 38)} ${arc(19, 16, 62, 160)} ${arc(19, 16, 200, 298)}`}
                fill="none"
                stroke="#9479dd"
                strokeWidth="2.500"
            />
            <path d="M1 8l11 .5L19 22l7-13.500L37 8l-5 4.500L20 38h-2L6 12.500z" fill="#fff" />
        </svg>
    );
}

const pages = ["VOICE", "EFFECTS", "MATRIX", "ADVANCED"];

function TopBar() {
    return (
        <div className="flex h-[46px] items-start pr-[7px]">
            <div className="flex w-[79px] shrink-0 justify-center pt-[5px] pr-[5px]">
                <Logo />
            </div>
            <nav className="flex w-[385px] shrink-0">
                {pages.map((page, i) => (
                    <a
                        key={page}
                        href="#"
                        className={clsx(
                            "flex h-[46px] flex-1 items-center justify-center border-t-[3px] text-[13px] font-light",
                            i === 0 ? "border-[#a787f7] text-[#9a80de]" : "border-[#4b4b4d] text-[#f0f0f0]",
                        )}>
                        {page}
                    </a>
                ))}
            </nav>
            <Selector
                name="preset"
                big
                className="mt-[9px] ml-2.5 h-[27px] flex-1 rounded-lg bg-[#171b1e] px-2 font-[Inter] text-[18px] font-light text-white">
                Whoosh
            </Selector>
            <button aria-label="Save" className="mt-4 ml-2.5">
                <svg width="18" height="14" viewBox="0 0 18 14" fill="none" stroke="#96999b">
                    <path d="M4 6H.5v7h17V6H14M9 0v9M5 5.500L9 9.500l4-4" />
                </svg>
            </button>
            <button aria-label="Menu" className="mt-4 ml-[9px]">
                <svg width="18" height="14" viewBox="0 0 18 14" stroke="#96999b">
                    <path d="M0 1.500h17.500M0 6.500h17.500M0 11.500h17.500" />
                </svg>
            </button>
            <svg width="202" height="22" viewBox="0 0 202 22" className="mt-[18px] ml-[15px]" aria-hidden="true">
                <path d="M0 1h174v4.500H0zM0 7h174v4.500H0z" fill="#15191b" />
                <path d="M175 1h26v4.500h-26zM175 7h26v4.500h-26z" fill="#202427" />
                <path d="M0 0h109v5H0zM0 6h109v5H0z" fill="#45dcc0" />
                {[5, 10, 18, 27, 39, 52, 67, 85, 104, 125, 148, 173].map((x) => (
                    <path key={x} d={`M${x + 0.5} 14v2`} stroke="#5d6164" />
                ))}
                <path d="M201 12v5h-4z" fill="#fff" />
            </svg>
            <div className="mt-[5px] ml-[7px] flex h-9 w-[196px] shrink-0 items-center rounded-lg bg-[#16171a]">
                <svg viewBox="0 0 196 6" className="h-1.5 w-full" preserveAspectRatio="none" aria-hidden="true">
                    <path d="M0 2.500h110l86 1.500" fill="none" stroke="#5b4a88" strokeWidth="1.500" />
                </svg>
            </div>
        </div>
    );
}

export default function App() {
    return (
        <div className="flex min-h-screen flex-col bg-[#262b2e] font-[Lato,sans-serif]">
            <HostBar />
            <TopBar />
            <main className="flex gap-[9px] pr-[7px] pb-[3px] pl-[5px]">
                <aside className="flex w-[65px] shrink-0 flex-col gap-[3px]">
                    <Macro label="MACRO 1" />
                    <Macro label="MACRO 2" />
                    <Macro label="MACRO 3" />
                    <Macro label="MACRO 4" />
                    <div className="flex h-[139px] flex-col">
                        <ModTab label="PITCH WHL" />
                        <ModTab label="MOD WHL" />
                    </div>
                    <div className="-mt-0.5 flex h-[68px] items-center justify-center gap-[9px] rounded bg-[#4c4f53]">
                        <Wheel spring />
                        <Wheel />
                    </div>
                </aside>
                <div className="flex min-w-0 flex-1 flex-col gap-[9px]">
                    <div className="grid grid-cols-[679fr_574fr] gap-[9px]">
                        <div className="flex min-w-0 flex-col gap-[3px]">
                            <Oscillator name="OSC 1" output="FILTER 1" />
                            <Oscillator name="OSC 2" output="FILTER 2" />
                            <Oscillator name="OSC 3" output="EFFECTS" />
                            <Sampler />
                            <div className="mt-1.5 flex gap-[3px]">
                                <Filter
                                    name="FILTER 1"
                                    model="Analog  :  Notch Blend"
                                    sources={["OSC1", "OSC2", "OSC3", "SMP", "FIL2"]}
                                    active={["OSC1", "SMP"]}
                                    className="flex-[336]">
                                    <div className="mt-[57px] h-[47px] border-t-2 border-[#e0a25c] bg-linear-to-b from-[#9c6a42] to-[#8a6645]" />
                                </Filter>
                                <Filter
                                    name="FILTER 2"
                                    model="Analog  :  12dB"
                                    sources={["OSC1", "OSC2", "OSC3", "SMP", "FIL1"]}
                                    active={["OSC2"]}
                                    off
                                    className="flex-[340]">
                                    <svg
                                        viewBox="0 0 320 104"
                                        preserveAspectRatio="none"
                                        className="size-full"
                                        aria-hidden="true">
                                        <path
                                            d="M0 53C60 54 90 50 110 43C124 38 132 38 140 51C155 72 170 90 190 104H0z"
                                            fill="#272c2f"
                                            stroke="#2d3235"
                                        />
                                    </svg>
                                </Filter>
                            </div>
                        </div>
                        <div className="flex min-w-0 flex-col gap-[3px]">
                            <Envelope />
                            <Lfo />
                            <div className="flex gap-[3px]">
                                <Random />
                                <div className="grid min-w-0 flex-1 grid-cols-4 grid-rows-2 gap-px">
                                    {sources.map((source) => (
                                        <div key={source} className="flex min-w-0">
                                            <ModTab label={source} />
                                        </div>
                                    ))}
                                </div>
                            </div>
                            <VoiceSettings />
                        </div>
                    </div>
                    <Keyboard />
                </div>
            </main>
            <footer className="flex-1 border-t border-[#3a3c3f] bg-[#19191c]" />
        </div>
    );
}
